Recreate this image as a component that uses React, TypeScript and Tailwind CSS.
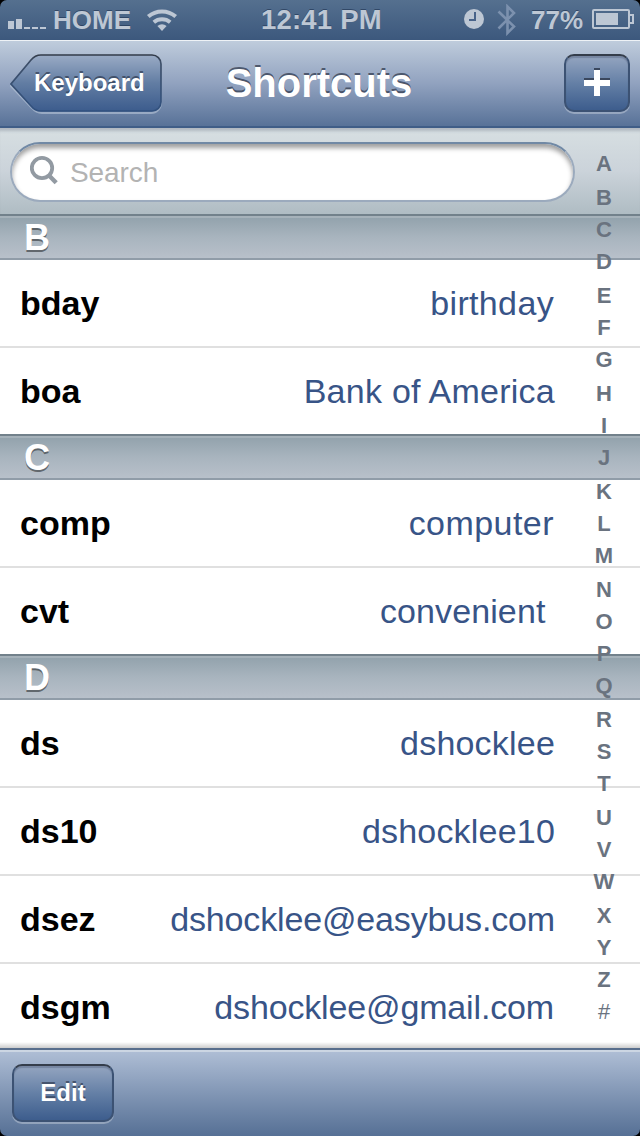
import clsx from 'clsx';

type Shortcut = { phrase: string; expansion: string; tracking: string };
type Section = { letter: string; items: Shortcut[] };

const SECTIONS: Section[] = [
  {
    letter: 'B',
    items: [
      { phrase: 'bday', expansion: 'birthday', tracking: 'tracking-[0.35px] mr-px' },
      { phrase: 'boa', expansion: 'Bank of America', tracking: 'tracking-[0.25px]' },
    ],
  },
  {
    letter: 'C',
    items: [
      { phrase: 'comp', expansion: 'computer', tracking: 'tracking-[0.45px] mr-px' },
      { phrase: 'cvt', expansion: 'convenient ', tracking: 'tracking-[0.1px]' },
    ],
  },
  {
    letter: 'D',
    items: [
      { phrase: 'ds', expansion: 'dshocklee', tracking: 'tracking-[0.2px]' },
      { phrase: 'ds10', expansion: 'dshocklee10', tracking: 'tracking-[0.2px]' },
      { phrase: 'dsez', expansion: 'dshocklee@easybus.com', tracking: 'tracking-[-0.15px]' },
      { phrase: 'dsgm', expansion: 'dshocklee@gmail.com', tracking: 'tracking-[-0.15px] mr-px' },
    ],
  },
];

const INDEX = 'ABCDEFGHIJKLMNOPQRSTUVWXYZ#'.split('');
// these letters take the leftover pixels of the index height
const TALL = 'ADGJMQTW';

const BUTTON =
  'flex items-center justify-center rounded-[10px] border-2 border-[#3c5273] border-t-[#343d4b] bg-linear-to-b from-[#94a5c0] via-[#6580a6] to-[#3d5d8d] text-2xl font-bold text-white shadow-[0_2px_0_rgba(255,255,255,0.3),inset_0_2px_1px_rgba(30,45,70,0.25)] [text-shadow:0_-2px_0_rgba(40,50,70,0.65)]';

function StatusBar() {
  return (
    <div className="flex h-10 shrink-0 items-center bg-linear-to-b from-[#55708f] to-[#3c587d] text-[26px] font-bold text-[#bdc7d4] [text-shadow:0_-1px_0_rgba(30,50,80,0.6)]">
      <svg className="mt-2 ml-2 shrink-0" width="39" height="12" viewBox="0 0 39 12" fill="#bdc7d4">
        <path d="M0 3h6v8H0zM8 1h6v10H8zM16 9h6v2h-6zM24 9h6v2h-6zM32 9h6v2h-6z" />
      </svg>
      <span className="ml-[6px] w-[93px]">HOME</span>
      <svg className="mt-[-2px] shrink-0" width="34" height="26" viewBox="0 0 34 26" fill="none" stroke="#bdc7d4" strokeWidth="4">
        <path d="M2.3 10.5a21 21 0 0 1 27.4 0" />
        <path d="M7.8 16.2a13 13 0 0 1 16.4 0" />
        <path d="M16 25l-4.6-5a7 7 0 0 1 9.2 0z" fill="#bdc7d4" stroke="none" />
      </svg>
      <span className="ml-[81px] w-[202px] whitespace-nowrap text-[27.5px] tracking-[0.2px]">12:41 PM</span>
      <svg className="shrink-0" width="22" height="22" viewBox="0 0 22 22">
        <circle cx="11" cy="10" r="10" fill="#bdc7d4" />
        <path d="M12 3V11H6" fill="none" stroke="#48638a" strokeWidth="2" />
      </svg>
      <svg className="ml-3 shrink-0" width="20" height="32" viewBox="0 0 20 32" fill="none" stroke="#7c91ae" strokeWidth="2.6">
        <path d="M1.5 7.5L17 22.5l-6.5 6.5V2.5L17 9 1.5 24.5" />
      </svg>
      <span className="ml-[14px] w-[61px]">77%</span>
      <svg className="mt-[-2px] shrink-0" width="42" height="20" viewBox="0 0 42 20">
        <rect x="1" y="1" width="36" height="18" rx="1" fill="none" stroke="#bdc7d4" strokeWidth="2" />
        <path d="M4 4h22v12H4z" fill="#bdc7d4" />
        <path d="M38 6h3v8h-3" fill="none" stroke="#bdc7d4" strokeWidth="2" />
      </svg>
    </div>
  );
}

function NavBar() {
  return (
    <div className="flex h-[88px] shrink-0 items-start justify-between border-t border-b-2 border-t-[#eef2f6] border-b-[#3f5d87] bg-linear-to-b from-[#bfccdc] via-[#91a2bf] to-[#587298] pt-[13px] pr-[10px] pl-[10px]">
      <div className="relative flex h-[58px] w-[152px] items-center pl-6">
        <svg className="absolute top-0 left-0" width="154" height="61" viewBox="0 0 154 61">
          <defs>
            <linearGradient id="back" x1="0" y1="0" x2="0" y2="1">
              <stop offset="0" stopColor="#9aabc5" />
              <stop offset="0.5" stopColor="#627da3" />
              <stop offset="1" stopColor="#3c5c8d" />
            </linearGradient>
            <linearGradient id="rim" x1="0" y1="0" x2="0" y2="1">
              <stop offset="0" stopColor="#323b49" />
              <stop offset="0.12" stopColor="#3e4f68" />
              <stop offset="1" stopColor="#31517f" />
            </linearGradient>
          </defs>
          <path
            d="M32 3H141a10 10 0 0 1 10 10V49a10 10 0 0 1-10 10H32Q26 59 22 54L1 32 22 8Q26 3 32 3z"
            fill="none"
            stroke="#b9c6d8"
            strokeOpacity="0.6"
            strokeWidth="2"
          />
          <path
            d="M31 1H142a9 9 0 0 1 9 9V48a9 9 0 0 1-9 9H31Q25 57 21 52L1 30 21 6Q25 1 31 1z"
            fill="url(#back)"
            stroke="url(#rim)"
            strokeWidth="1.7"
          />
        </svg>
        <span className="relative text-2xl font-bold text-white [text-shadow:0_-2px_0_rgba(40,50,70,0.65)]">Keyboard</span>
      </div>
      <h1 className="mt-[-1px] mr-[88px] text-[40px] leading-[60px] font-bold text-white [text-shadow:0_-2px_0_rgba(50,60,80,0.75)]">
        Shortcuts
      </h1>
      <div className={clsx(BUTTON, 'h-[58px] w-[66px]')}>
        <svg className="mt-[-3px]" width="26" height="28" viewBox="0 0 26 28">
          <path d="M10 0h6v2h-6zM0 10h10v2H0zM16 10h10v2H16z" fill="#3a475d" />
          <path d="M10 2h6v10h10v6H16v10h-6V18H0v-6h10z" fill="#fff" />
        </svg>
      </div>
    </div>
  );
}

function SearchBar() {
  return (
    <div className="h-[86px] bg-linear-to-b from-[#d7dfe2] via-[#cbd3da] to-[#afbcc3] pt-[14px] pl-[10px] shadow-[inset_0_5px_3px_-2px_rgba(90,100,120,0.3)]">
      <div className="flex h-[60px] w-[565px] items-center rounded-full border-2 border-[#9baabd] border-t-[#7189a5] bg-white pl-[18px] shadow-[inset_0_4px_5px_rgba(0,0,0,0.38)]">
        <svg className="mt-[-2px]" width="30" height="32" viewBox="0 0 30 32" fill="none" stroke="#929aa2">
          <circle cx="12" cy="13" r="10.2" strokeWidth="3.8" />
          <path d="M19 20.5l7.2 7.2" strokeWidth="4.4" />
        </svg>
        <span className="ml-[10px] pt-px text-[28px] tracking-[-0.1px] text-[#b3b3b3]">Search</span>
      </div>
    </div>
  );
}

function SectionHeader({ letter }: { letter: string }) {
  return (
    <div className="h-[46px] border-t-2 border-b-2 border-t-[#72818b] border-b-[#909ca8] bg-linear-to-b from-[#91a1ab] via-[#a8b4be] to-[#b8c0ca] pl-6 text-[36px] leading-[43px] font-bold text-white shadow-[inset_0_2px_0_#a6b2ba] [text-shadow:0_2px_0_rgba(70,75,80,0.75)]">
      {letter}
    </div>
  );
}

function Row({ item, last }: { item: Shortcut; last: boolean }) {
  return (
    <div
      className={clsx(
        'flex items-center justify-between bg-white pr-[85px] pl-5 text-[34px]',
        last ? 'h-[86px]' : 'h-[88px] border-b-2 border-[#e0e0e0]',
      )}
    >
      <span className="font-bold text-black">{item.phrase}</span>
      <span className={clsx('whitespace-pre text-[#385487]', item.tracking)}>{item.expansion}</span>
    </div>
  );
}

export default function App() {
  return (
    <div className="h-[1136px] w-[640px] overflow-hidden bg-black font-['Liberation_Sans',Arial,sans-serif]">
      <div className="flex h-full flex-col overflow-hidden rounded-[7px]">
        <StatusBar />
        <NavBar />
        <div className="relative min-h-0 flex-1 overflow-hidden bg-white">
          <SearchBar />
          {SECTIONS.map(s => (
            <div key={s.letter}>
              <SectionHeader letter={s.letter} />
              {s.items.map((item, i) => (
                <Row key={item.phrase} item={item} last={i === s.items.length - 1} />
              ))}
            </div>
          ))}
          {/* index strip floats over the list */}
          <div className="absolute top-[23px] right-4 flex w-10 flex-col items-center text-[22px] leading-[26px] font-bold text-[#6a737f]">
            {INDEX.map(l => (
              <span
                key={l}
                className={clsx(TALL.includes(l) ? 'h-[34px]' : 'h-8', l === '#' && 'font-normal')}
              >
                {l}
              </span>
            ))}
          </div>
          <div className="absolute inset-x-0 bottom-0 h-[6px] bg-linear-to-b from-transparent to-black/20" />
        </div>
        <div className="h-[88px] shrink-0 border-t-2 border-[#586e8c] bg-linear-to-b from-[#b0bfd6] to-[#567095] pt-[14px] pl-3 shadow-[inset_0_2px_0_#ccd6e3]">
          <div className={clsx(BUTTON, 'h-[58px] w-[102px]')}>Edit</div>
        </div>
      </div>
    </div>
  );
}
